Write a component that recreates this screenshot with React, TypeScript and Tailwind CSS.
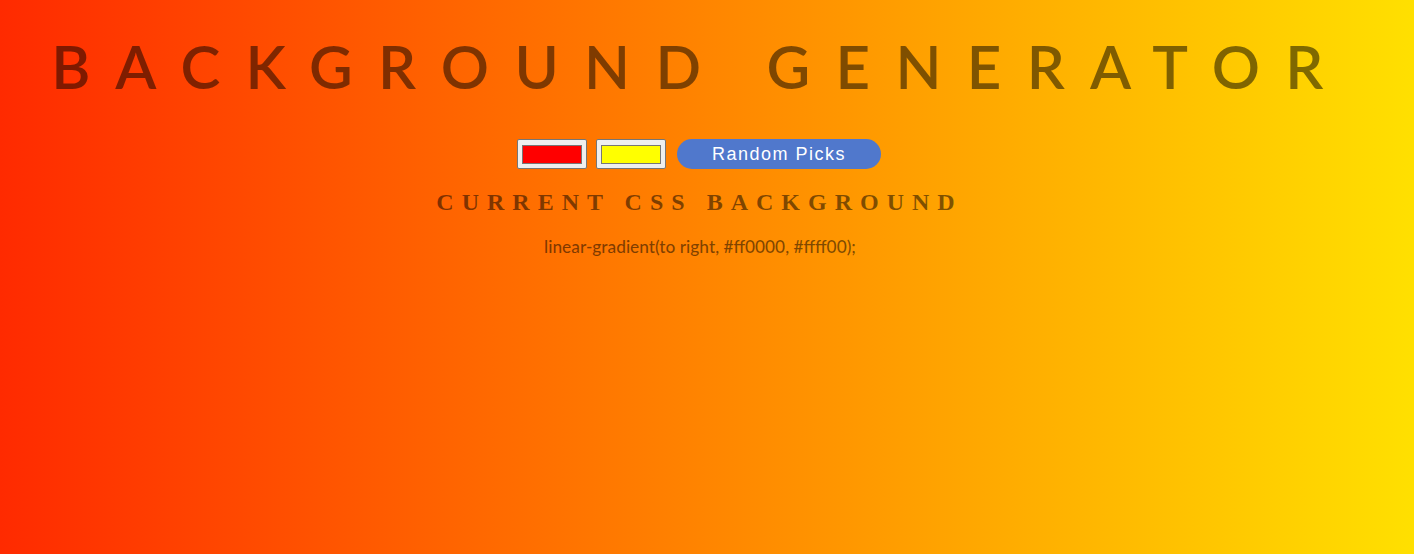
export default function App() {
  return (
    <div className="min-h-[554px] w-full bg-[linear-gradient(to_right,#ff2a00,#ffe000)] text-center">
      <h1 className="pt-[31px] pr-[14px] font-['Lato','Open_Sans',sans-serif] text-[60px] font-semibold leading-[70px] tracking-[25.3px] text-black/50">
        BACKGROUND GENERATOR
      </h1>

      <div className="mt-[38px] flex items-center justify-center pr-[16px]">
        <div className="flex h-[30px] w-[70px] items-center justify-center rounded-[2px] border border-[#767676] bg-[#efefef]">
          <div className="h-[19px] w-[60px] border border-[#777] bg-[#ff0000]" />
        </div>
        <div className="ml-[9px] flex h-[30px] w-[70px] items-center justify-center rounded-[2px] border border-[#767676] bg-[#efefef]">
          <div className="h-[19px] w-[60px] border border-[#777] bg-[#ffff00]" />
        </div>
        <button className="ml-[11px] h-[30px] w-[204px] rounded-full bg-[#5078cc] font-['Liberation_Sans',Arial,sans-serif] text-[18px] tracking-[1.5px] text-white">
          Random Picks
        </button>
      </div>

      <h3 className="mt-[18px] pr-[15px] font-['Liberation_Serif','Times_New_Roman',serif] text-[24px] font-bold leading-[30px] tracking-[8px] text-black/50">
        CURRENT CSS BACKGROUND
      </h3>

      <p className="mt-[17px] pr-[14px] font-['Lato','Open_Sans',sans-serif] text-[17.3px] font-medium text-black/50">
        linear-gradient(to right, #ff0000, #ffff00);
      </p>
    </div>
  );
}
